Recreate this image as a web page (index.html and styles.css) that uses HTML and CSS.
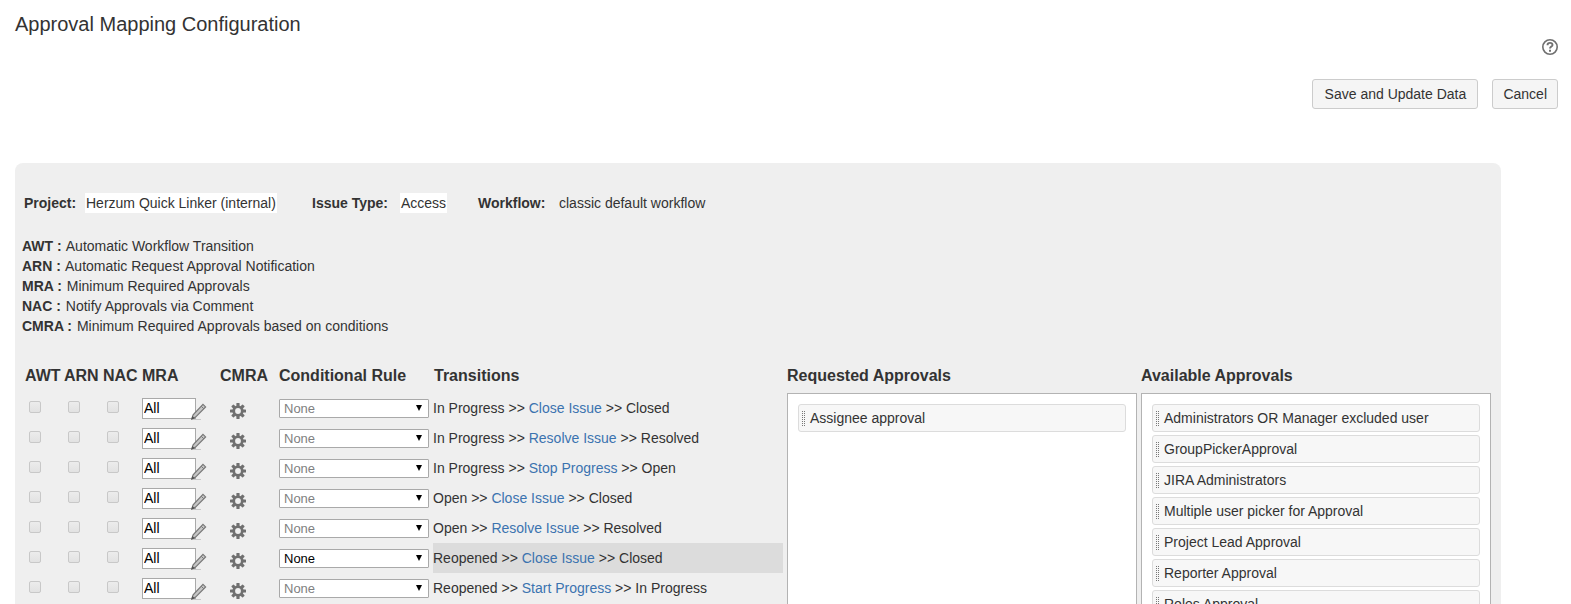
FILE: index.html
```html
<!DOCTYPE html>
<html lang="en">
<head>
<meta charset="utf-8">
<title>Approval Mapping Configuration</title>
<link rel="stylesheet" href="styles.css">
</head>
<body>
<svg class="sprite" aria-hidden="true">
  <symbol id="pencil" viewBox="0 0 16 17">
    <path d="M1 16.500h9" stroke="#c8c8c8" fill="none"/>
    <path d="M12 1.300l2.600 2.600-10 10.200-3.800 1.900 1.300-4.200z" fill="#c6c6c6" stroke="#787878" stroke-width="1.200"/>
    <path d="M10.200 3.200l2.600 2.600" stroke="#787878" fill="none"/>
    <path d="M.4 16.500l.9-3.500 2.500 2.300z" fill="#555"/>
  </symbol>
  <symbol id="gear" viewBox="0 0 16 16">
    <g fill="#707070">
      <rect x="6.400" y="0" width="3.200" height="16" rx=".6"/>
      <rect x="6.400" y="0" width="3.200" height="16" rx=".6" transform="rotate(45 8 8)"/>
      <rect x="6.400" y="0" width="3.200" height="16" rx=".6" transform="rotate(90 8 8)"/>
      <rect x="6.400" y="0" width="3.200" height="16" rx=".6" transform="rotate(135 8 8)"/>
      <circle cx="8" cy="8" r="5.600"/>
    </g>
    <circle cx="8" cy="8" r="2.900" fill="#efefef"/>
  </symbol>
</svg>
<header class="page-header">
  <h1>Approval Mapping Configuration</h1>
  <a class="help" href="#" aria-label="Help">
    <svg viewBox="0 0 16 16" width="16" height="16" fill="none" stroke="#707070">
      <circle cx="8" cy="8" r="7.200" stroke-width="1.600"/>
      <path d="M5.500 6.200c0-1.600 1.100-2.300 2.500-2.300s2.500.8 2.500 2c0 1.800-2.500 1.600-2.500 3.700" stroke-width="1.900"/>
      <path d="M8 10.700v2" stroke-width="2"/>
    </svg>
  </a>
  <div class="actions">
    <button type="button" class="save">Save and Update Data</button>
    <button type="button">Cancel</button>
  </div>
</header>
<main class="panel">
  <dl class="summary">
    <dt>Project:</dt><dd class="filled">Herzum Quick Linker (internal)</dd>
    <dt>Issue Type:</dt><dd class="filled">Access</dd>
    <dt>Workflow:</dt><dd>classic default workflow</dd>
  </dl>
  <ul class="legend">
    <li><b>AWT :</b> Automatic Workflow Transition</li>
    <li><b>ARN :</b> Automatic Request Approval Notification</li>
    <li><b>MRA :</b> Minimum Required Approvals</li>
    <li><b>NAC :</b> Notify Approvals via Comment</li>
    <li><b>CMRA :</b> Minimum Required Approvals based on conditions</li>
  </ul>
  <div class="mapping">
    <table class="rules">
      <colgroup><col class="c-check"><col class="c-check"><col class="c-check"><col class="c-mra"><col class="c-cmra"><col class="c-rule"><col></colgroup>
      <thead><tr><th>AWT</th><th>ARN</th><th>NAC</th><th>MRA</th><th>CMRA</th><th>Conditional Rule</th><th class="th-transition">Transitions</th></tr></thead>
      <tbody id="rows"></tbody>
    </table>
    <section class="approvals">
      <h2>Requested Approvals</h2>
      <ul class="box"><li>Assignee approval</li></ul>
    </section>
    <section class="approvals">
      <h2>Available Approvals</h2>
      <ul class="box">
        <li>Administrators OR Manager excluded user</li>
        <li>GroupPickerApproval</li>
        <li>JIRA Administrators</li>
        <li>Multiple user picker for Approval</li>
        <li>Project Lead Approval</li>
        <li>Reporter Approval</li>
        <li>Roles Approval</li>
      </ul>
    </section>
  </div>
</main>
<script src="rows.js"></script>
</body>
</html>
```
FILE: styles.css
```css
* { box-sizing: border-box; }
body {
  margin: 0;
  height: 100vh;
  overflow: hidden;
  display: flex;
  flex-direction: column;
  background: #fff;
  color: #333;
  font: 14px/20px "Liberation Sans", Arial, sans-serif;
}
h1, h2, ul, dl, dd { margin: 0; padding: 0; }
ul { list-style: none; }
a { color: #3b73af; text-decoration: none; }
.sprite { display: none; }

.page-header {
  flex: none;
  display: flex;
  flex-direction: column;
  padding: 14px 13px 54px 15px;
}
h1 { font-size: 20px; font-weight: normal; line-height: 20px; margin-bottom: 5px; }
.help { align-self: flex-end; height: 16px; margin-bottom: 24px; }
.help svg { display: block; }
.actions { display: flex; justify-content: flex-end; gap: 14px; }
.actions button {
  height: 30px;
  padding: 0 10px;
  border: 1px solid #ccc;
  border-radius: 3px;
  background: #f5f5f5;
  color: #333;
  font: inherit;
}
.actions .save { min-width: 166px; }

.panel {
  flex: 1 0 auto;
  margin: 0 70px 0 15px;
  padding: 30px 10px 10px;
  border-radius: 8px 8px 0 0;
  background: #efefef;
}
.summary {
  display: grid;
  grid-template-columns: 61px 227px 88px 78px 81px auto;
  justify-content: start;
  justify-items: start;
  margin-left: -1px;
  margin-bottom: 23px;
}
dt { font-weight: bold; }
.filled { background: #fff; padding: 0 1px; }
.legend { margin-left: -3px; margin-bottom: 29px; }
.legend b { margin-right: 1px; }

.mapping { display: flex; align-items: flex-start; }
.rules {
  flex: 1 1 408px;
  min-width: 0;
  border-collapse: collapse;
  table-layout: fixed;
  width: 408px;
}
.c-check { width: 39px; }
.c-mra { width: 78px; }
.c-cmra { width: 59px; }
.c-rule { width: 154px; }
.rules th, h2 {
  height: 28px;
  padding: 1px 0 7px;
  text-align: left;
  font-size: 16px;
  font-weight: bold;
  line-height: 20px;
  white-space: nowrap;
}
.rules .th-transition { padding-left: 1px; }
.rules td { height: 30px; padding: 0; white-space: nowrap; }
.rules .current { background: #dcdcdc; }
.rules input[type="checkbox"] {
  appearance: none;
  display: block;
  width: 12px;
  height: 12px;
  margin: 0 0 2px 4px;
  border: 1px solid #c8c8c8;
  border-radius: 2px;
  background: linear-gradient(#ececec, #e2e2e2);
}
.mra { display: flex; align-items: center; }
.mra input {
  width: 54px;
  height: 21px;
  padding: 0 1px;
  border: 1px solid #a9a9a9;
  background: #fff;
  color: #000;
  font: inherit;
}
.icon-button { display: block; padding: 0; border: 0; background: none; }
.icon-button svg { display: block; }
.mra .icon-button { margin: 7px 0 0 -5px; }
.gear { margin: 5px 0 0 10px; }
.select { display: block; position: relative; width: 150px; }
.select select {
  appearance: none;
  display: block;
  width: 100%;
  height: 19px;
  padding: 0 4px;
  border: 1px solid #a9a9a9;
  border-radius: 1px;
  background: #fff;
  color: #000;
  font: 13px "Liberation Sans", Arial, sans-serif;
  opacity: 1;
}
.select select:disabled { color: #808080; }
.select::after {
  content: "";
  position: absolute;
  top: 6px;
  right: 7px;
  border: 3px solid transparent;
  border-top: 6px solid #000;
  border-bottom: 0;
  pointer-events: none;
}

.approvals { flex: 1 1 0; min-width: 0; margin-left: 4px; }
.box {
  display: flex;
  flex-direction: column;
  gap: 3px;
  min-height: 260px;
  padding: 10px;
  border: 1px solid #b3b3b3;
  background: #fff;
}
.box li {
  display: flex;
  align-items: center;
  gap: 5px;
  height: 28px;
  padding-left: 3px;
  border: 1px solid #dcdcdc;
  border-radius: 3px;
  background: #f7f7f7;
}
.box li::before {
  content: "";
  width: 3px;
  height: 15px;
  background:
    linear-gradient(90deg, transparent 1px, #f7f7f7 1px 2px, transparent 2px),
    repeating-linear-gradient(#777 0 1px, #f7f7f7 1px 2px);
}
```
FILE: rows.js
```js
const transitions = [
  ["In Progress", "Close Issue", "Closed"],
  ["In Progress", "Resolve Issue", "Resolved"],
  ["In Progress", "Stop Progress", "Open"],
  ["Open", "Close Issue", "Closed"],
  ["Open", "Resolve Issue", "Resolved"],
  ["Reopened", "Close Issue", "Closed"],
  ["Reopened", "Start Progress", "In Progress"]
];
const current = 5;
const check = (label) => `<td><input type="checkbox" aria-label="${label}" disabled></td>`;

document.getElementById("rows").innerHTML = transitions.map(([from, action, to], i) => `
  <tr>
    ${check("AWT")}${check("ARN")}${check("NAC")}
    <td><div class="mra"><input type="text" value="All" aria-label="MRA"><button type="button" class="icon-button" aria-label="Edit"><svg width="16" height="17"><use href="#pencil"/></svg></button></div></td>
    <td><button type="button" class="icon-button gear" aria-label="CMRA"><svg width="16" height="16"><use href="#gear"/></svg></button></td>
    <td><span class="select"><select aria-label="Conditional Rule" ${i === current ? "" : "disabled"}><option>None</option></select></span></td>
    <td class="${i === current ? "current" : ""}">${from} &gt;&gt; <a href="#">${action}</a> &gt;&gt; ${to}</td>
  </tr>`).join("");
```
